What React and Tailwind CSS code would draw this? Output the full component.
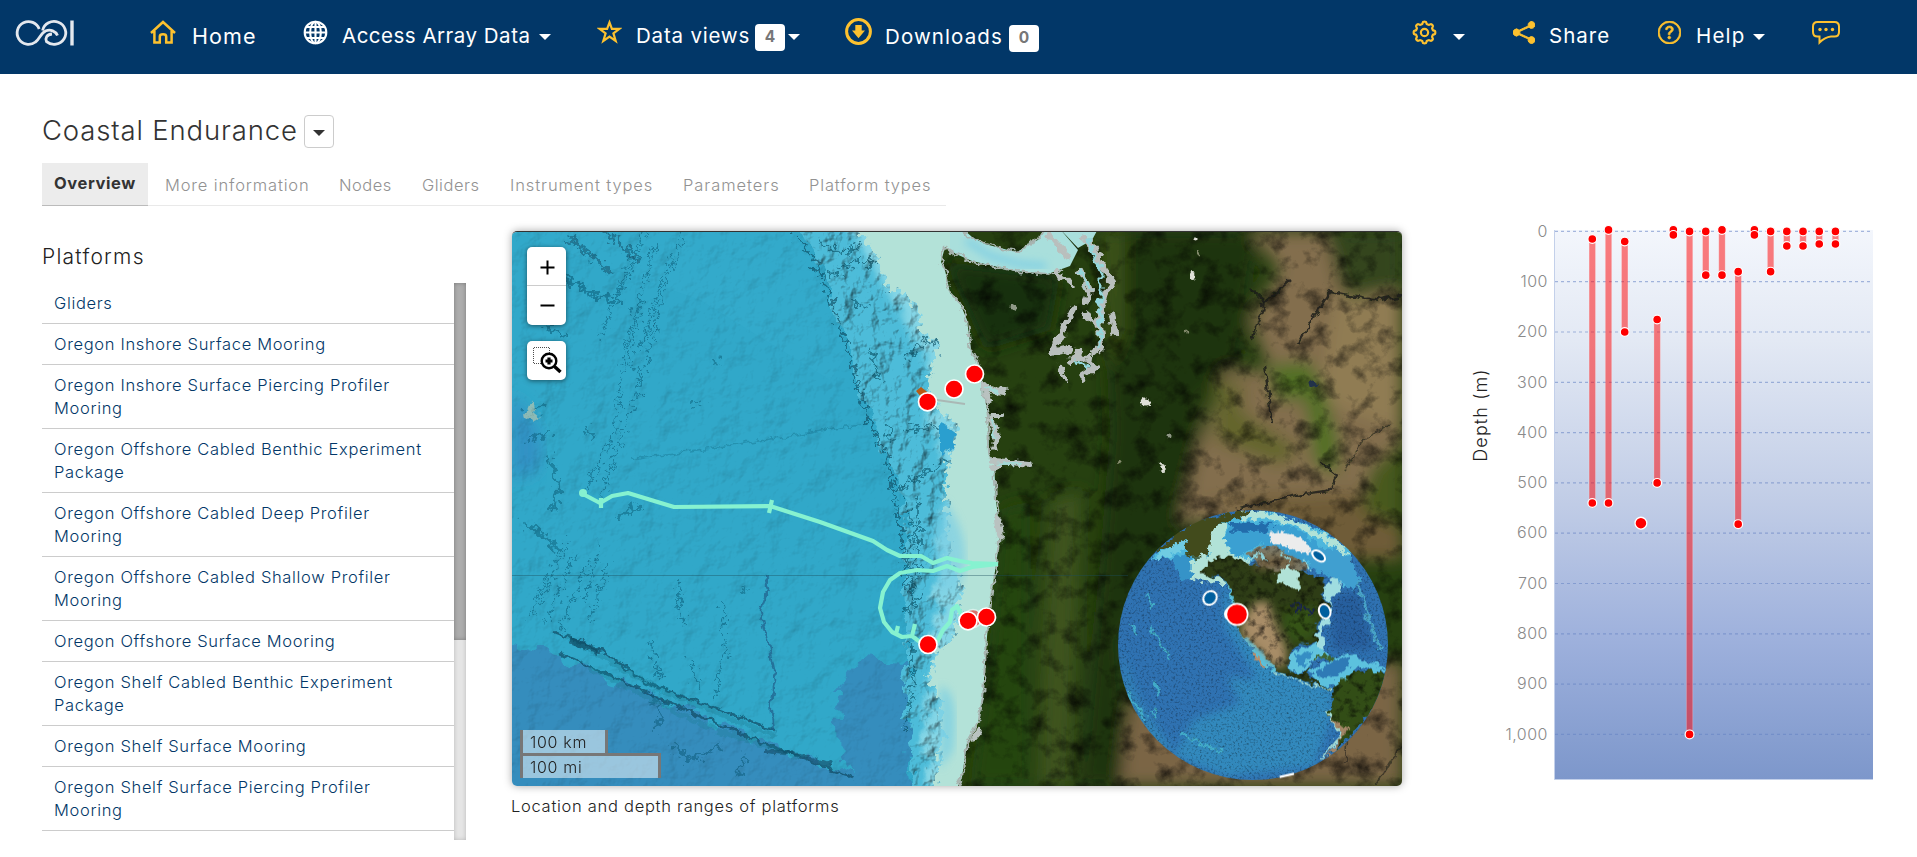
import React from "react";
import { BsShareFill, BsQuestionCircle } from "react-icons/bs";

const PLATFORMS = [
  "Gliders",
  "Oregon Inshore Surface Mooring",
  "Oregon Inshore Surface Piercing Profiler Mooring",
  "Oregon Offshore Cabled Benthic Experiment Package",
  "Oregon Offshore Cabled Deep Profiler Mooring",
  "Oregon Offshore Cabled Shallow Profiler Mooring",
  "Oregon Offshore Surface Mooring",
  "Oregon Shelf Cabled Benthic Experiment Package",
  "Oregon Shelf Surface Mooring",
  "Oregon Shelf Surface Piercing Profiler Mooring",
];

// [column, shallowest depth, deepest depth]
const RANGES = [
  [0, 15, 540],
  [1, -3, 540],
  [2, 20, 200],
  [4, 175, 500],
  [5, -3, 7],
  [6, 0, 1000],
  [7, 0, 87],
  [8, -3, 87],
  [9, 80, 582],
  [10, -3, 7],
  [11, 0, 80],
  [12, 0, 29],
  [13, 0, 29],
  [14, 0, 25],
  [15, 0, 25],
];

const GEAR = Array.from({ length: 96 }, (_, i) => {
  const a = (i / 96) * Math.PI * 2;
  const r = 9.3 + 1.1 * Math.tanh(2.2 * Math.cos(8 * a));
  return `${(12 + r * Math.cos(a)).toFixed(2)},${(12 + r * Math.sin(a)).toFixed(2)}`;
}).join(" ");

function Caret({ className }) {
  return (
    <svg className={"h-[6px] w-[12px] shrink-0 " + className} viewBox="0 0 12 6">
      <path d="M0 0H12L6 6Z" fill="currentColor" />
    </svg>
  );
}

function Label({ className, children }) {
  return (
    <span className={"shrink-0 whitespace-nowrap font-normal leading-[30px] text-white " + className}>
      {children}
    </span>
  );
}

function Badge({ className, children }) {
  return (
    <span
      className={
        "flex h-[27px] w-[30px] shrink-0 items-center justify-center rounded-[4px] bg-white pb-[2px] text-[15.5px] font-bold text-[#777] " +
        className
      }
    >
      {children}
    </span>
  );
}

function Header() {
  return (
    <header className="flex h-[74px] items-start bg-[#023768] text-white">
      <svg className="ml-[14px] mt-[18px] h-[30px] w-[62px] shrink-0" viewBox="0 0 62 30" fill="none" stroke="#e4e8ee" strokeWidth="2.8">
        <path d="M25.200 11A11.400 11.400 0 1 0 21.500 24C26 21 26.500 15 32 12.800C36.500 11.200 41.500 13 43.500 17.500" />
        <path d="M28.600 12.500A11.700 11.400 0 1 1 32.500 23.600C31 20 32.500 16.500 38 16" />
        <path d="M58 2.500V27.500" strokeWidth="3.400" />
      </svg>
      <svg className="ml-[74px] mt-[20px] h-[24px] w-[26px] shrink-0" viewBox="0 0 26 24" fill="none" stroke="#fdc12f" strokeWidth="2.5">
        <path d="M1 13L13 2L25 13M4.400 11V22.500H9.800V16.500C9.800 13.600 16.200 13.600 16.200 16.500V22.500H21.600V11" />
      </svg>
      <Label className="ml-[16px] mt-[21px] w-[111px] text-[21.500px] tracking-[1.100px]">Home</Label>
      <svg className="mt-[20px] h-[25px] w-[25px] shrink-0" viewBox="0 0 25 25" fill="none" stroke="#fff" strokeWidth="2.100">
        <circle cx="12.500" cy="12.500" r="10.800" />
        <ellipse cx="12.500" cy="12.500" rx="5.300" ry="10.800" />
        <path d="M12.500 1.500V23.500M1.700 12.500H23.300M3.500 7H21.500M3.500 18H21.500" />
      </svg>
      <Label className="ml-[14px] mt-[21px] w-[197px] text-[20.500px] tracking-[0.500px]">Access Array Data</Label>
      <Caret className="mt-[34px]" />
      <svg className="ml-[46px] mt-[19px] h-[25px] w-[25px] shrink-0" viewBox="0 0 25 25" fill="none" stroke="#fdc12f" strokeWidth="2.200">
        <path d="M12.500 3.400L14.900 9.900H22.300L16.400 14.300L18.700 22L12.500 17.500L6.300 22L8.600 14.300L2.700 9.900H10.100Z" />
      </svg>
      <Label className="ml-[14px] mt-[21px] w-[119px] text-[20.500px] tracking-[0.800px]">Data views</Label>
      <Badge className="mt-[24px]">4</Badge>
      <Caret className="ml-[3px] mt-[34px]" />
      <svg className="ml-[45px] mt-[18px] h-[27px] w-[27px] shrink-0" viewBox="0 0 27 27">
        <circle cx="13.500" cy="13.500" r="11.900" fill="none" stroke="#fdc12f" strokeWidth="3" />
        <path d="M10.300 7H16.700V12.500H20L13.500 20.200L7 12.500H10.300Z" fill="#fdc12f" />
      </svg>
      <Label className="ml-[13px] mt-[22px] w-[124px] text-[20.500px] tracking-[1.100px]">Downloads</Label>
      <Badge className="mt-[25px]">0</Badge>
      <svg className="ml-[373px] mt-[20px] h-[25px] w-[25px] shrink-0" viewBox="0 0 24 24" fill="none" stroke="#fdc12f">
        <polygon points={GEAR} strokeWidth="2.100" />
        <circle cx="12" cy="12" r="3.500" strokeWidth="2.100" />
      </svg>
      <Caret className="ml-[16px] mt-[34px]" />
      <BsShareFill className="ml-[48px] mt-[21px] h-[23px] w-[22px] shrink-0 text-[#fdc12f]" strokeWidth="0.700" />
      <Label className="ml-[14px] mt-[21px] w-[109px] text-[20.500px] tracking-[1px]">Share</Label>
      <BsQuestionCircle className="mt-[21px] h-[23px] w-[23px] shrink-0 text-[#fdc12f]" strokeWidth="0.500" />
      <Label className="ml-[15px] mt-[21px] w-[57px] text-[20.500px] tracking-[1.200px]">Help</Label>
      <Caret className="mt-[34px]" />
      <svg className="ml-[47px] mt-[20px] h-[26px] w-[28px] shrink-0" viewBox="0 0 28 26" fill="none" stroke="#fdc12f" strokeWidth="2">
        <path d="M5.500 2H22.500Q27 2 27 6.500V12Q27 16.500 22.500 16.500H19C14 17 10.500 19.500 7.500 22.500V16.500H5.500Q1 16.500 1 12V6.500Q1 2 5.500 2Z" />
        <g fill="#fdc12f" stroke="none">
          <circle cx="8" cy="9.500" r="1.700" />
          <circle cx="14" cy="9.500" r="1.700" />
          <circle cx="20.500" cy="9.500" r="1.700" />
        </g>
      </svg>
    </header>
  );
}

function Tabs() {
  const tab = "shrink-0 whitespace-nowrap pt-[11px] text-[16.5px] font-light leading-[23px] text-[#929292] ";
  return (
    <nav className="mt-[15px] flex h-[43px] w-[904px] border-b border-[#e9e9e9]">
      <div className="-mb-px h-[43px] w-[106px] shrink-0 whitespace-nowrap border-b border-[#bbb] bg-[#ececec] pl-[12px] pt-[9px] text-[16.5px] font-bold leading-[23px] tracking-[0.600px] text-[#333]">
        Overview
      </div>
      <div className={tab + "ml-[17px] w-[174px] tracking-[0.850px]"}>More information</div>
      <div className={tab + "w-[83px] tracking-[0.500px]"}>Nodes</div>
      <div className={tab + "w-[88px] tracking-[0.500px]"}>Gliders</div>
      <div className={tab + "w-[173px] tracking-[0.900px]"}>Instrument types</div>
      <div className={tab + "w-[126px] tracking-[0.950px]"}>Parameters</div>
      <div className={tab + "tracking-[0.850px]"}>Platform types</div>
    </nav>
  );
}

function Globe() {
  return (
    <g transform="translate(940 490) scale(0.33333)">
      <clipPath id="globe">
        <circle cx="939" cy="465" r="405" />
      </clipPath>
      <g clipPath="url(#globe)">
        <g filter="url(#speckle)">
          <rect x="530" y="50" width="820" height="830" fill="#2f72b2" />
          <g filter="url(#blurBig)">
            <path d="M860 560L1180 590L1170 700L1120 830L860 860L700 800L760 690L900 640Z" fill="#3389bd" />
            <path d="M540 480L600 640L700 780L650 790L560 650Z" fill="#3085ba" />
            <path d="M1170 320L1260 300L1300 480L1180 480Z" fill="#285f9e" />
            <path d="M850 270L930 460L1060 560L1150 590L1100 620L960 580L850 400Z" fill="#308abf" />
          </g>
          <path d="M1225 205Q1270 320 1300 430L1325 480" fill="none" stroke="#48a4c9" strokeWidth="10" filter="url(#coast)" />
          <path d="M630 410L690 505M575 405L590 430M640 570L660 610M560 610L620 690M720 730L850 790M640 660L650 690M620 310L640 350" fill="none" stroke="#42acca" strokeWidth="8" filter="url(#coast)" />
        </g>
        <g filter="url(#coast)">
          <path d="M640 190L735 145L850 90L900 65H990L1140 120L1230 180L1215 300L1190 265L1090 215L1000 220L880 210L800 220L760 270L720 260L700 205L640 208Z" fill="#4db7dd" />
          <path d="M700 205L750 190L760 270L720 265Z" fill="#3593c8" />
          <path d="M870 105L990 95L1090 125L1160 190L1100 220L1060 210L960 160L890 210L850 150Z" fill="#3aa0d2" />
          <path d="M1120 170L1210 180L1260 260L1240 300L1190 270L1110 230Z" fill="#3f9fd0" />
          <path d="M870 95L1000 102L980 125L880 125Z" fill="#246cab" />
          <path d="M900 62Q1010 60 1100 110L1200 160L1230 200L1080 115L980 85L900 90Z" fill="#b1e2d7" />
          <path d="M640 185L760 95L940 58L920 75L830 105L800 200L740 200L735 148L690 170Z" fill="#434b1d" />
          <path d="M645 195L700 165L735 148L738 175L690 200L650 208Z" fill="#6fcce2" />
          <path d="M805 195L810 150L825 105L865 98L850 145L870 190L920 205L940 230L840 215L795 230Z" fill="#b1e2d7" />
          <path d="M755 205L800 195V260L840 262L860 280L780 275L755 265Z" fill="#b1e2d7" />
          <path d="M850 260L865 290L880 340L895 420L925 460L975 530L1010 548L1000 500L950 430L890 300Z" fill="#5ac2dd" />
        </g>
        <g filter="url(#landTex2)">
          <g filter="url(#coast)">
            <path d="M780 245L830 197L880 203L930 222L1000 228L1050 235L1100 250L1150 262L1155 285L1145 310L1165 345L1150 380L1130 400L1128 435L1145 475L1138 485L1120 458L1080 460L1050 485L1048 530L1065 548L1090 545L1105 530L1115 535L1108 565L1140 570L1175 600L1160 602L1120 580L1060 565L1005 540L960 480L930 450L900 430L888 390L880 320L860 275L835 258L800 262Z" fill="#2e3c12" />
            <path d="M920 195L960 165L1010 170L1060 200L1110 220L1100 245L1000 240L940 218Z" fill="#7b7a68" />
          </g>
          <g filter="url(#blurBig)">
            <path d="M945 335L985 335L1005 400L1040 480L1035 530L1000 530L900 430L910 390Z" fill="#a88d68" />
            <path d="M1020 370L1130 345L1125 445L1050 460Z" fill="#345214" />
            <path d="M960 200L1070 200L1060 230L940 240Z" fill="#6f5d3d" />
          </g>
          <g filter="url(#coast)">
            <path d="M1185 575L1230 545L1300 540L1340 545L1330 620L1240 730L1180 790L1205 730L1165 680Z" fill="#304d16" />
            <path d="M1165 680L1210 705L1230 710L1180 785L1150 810L1205 735Z" fill="#a38767" />
          </g>
        </g>
        <g filter="url(#coast)">
          <path d="M950 490L975 528L968 532L935 485Z" fill="#b88f6c" />
          <path d="M920 215L960 190L985 215M1020 190L1050 215M1090 205L1110 235" fill="none" stroke="#8fd5dc" strokeWidth="6" />
          <path d="M1010 250L1045 225L1080 262L1078 305L1050 285L1010 275Z" fill="#b1e2d7" />
          <path d="M1145 300L1195 260L1205 305L1175 320L1165 400L1145 430L1155 480L1138 480L1128 440L1150 380L1170 345Z" fill="#9fdde0" />
          <path d="M1050 490L1120 460L1145 475L1165 500L1115 512L1100 535L1075 550L1050 535Z" fill="#62c4de" />
          <path d="M1065 498L1120 482L1105 512L1075 535Z" fill="#358dc4" />
          <path d="M1110 540L1180 505L1245 490L1260 510L1310 520L1340 540L1300 545L1260 530L1190 580L1155 590L1120 565Z" fill="#5cc1de" />
          <path d="M1125 545L1175 515L1235 500L1225 530L1170 565L1135 560Z" fill="#2f7ab6" />
          <path d="M1120 502Q1150 488 1190 505L1186 511Q1150 499 1122 508Z" fill="#3e6330" />
          <path d="M1005 545L1060 570L1175 600" fill="none" stroke="#a5dcd4" strokeWidth="4" />
          <path d="M1165 660L1175 690L1205 735L1145 805" fill="none" stroke="#a5dcd4" strokeWidth="5" />
          <path d="M985 130L1030 122L1090 145L1120 195L1085 188L1040 168L1000 165Z" fill="#ececec" />
          <path d="M1050 345L1080 342L1074 372M1090 352L1118 360L1102 370" fill="none" stroke="#17204d" strokeWidth="6" />
        </g>
      </g>
      <g fill="#005f9e" stroke="#fff" strokeWidth="6">
        <ellipse cx="810" cy="324" rx="19" ry="22" transform="rotate(40 810 324)" />
        <ellipse cx="1154" cy="364" rx="17" ry="22" transform="rotate(-20 1154 364)" />
        <ellipse cx="1136" cy="198" rx="22" ry="13" transform="rotate(38 1136 198)" />
      </g>
      <circle cx="874" cy="372" r="22" fill="#fff" />
      <circle cx="891" cy="373" r="32" fill="#f00" stroke="#fff" strokeWidth="5" />
      <path d="M1019 861L1062 851" stroke="#fff" strokeWidth="7" />
    </g>
  );
}

function MapArt() {
  return (
    <svg className="-mt-px block h-[555px] w-[890px]" viewBox="512 231 890 555">
      <defs>
        <filter id="blurBig" x="-20%" y="-20%" width="140%" height="140%"><feGaussianBlur stdDeviation="12" /></filter>
        <filter id="blurMid" x="-20%" y="-20%" width="140%" height="140%"><feGaussianBlur stdDeviation="8" /></filter>
        <filter id="blurSm" x="-10%" y="-10%" width="120%" height="120%"><feGaussianBlur stdDeviation="4" /></filter>
        <filter id="relief" x="0" y="0" width="100%" height="100%" colorInterpolationFilters="sRGB">
          <feTurbulence type="fractalNoise" baseFrequency="0.040 0.040" numOctaves="6" seed="4" result="n" />
          <feDiffuseLighting in="n" surfaceScale="1.300" diffuseConstant="1.120" lightingColor="#fff" result="l">
            <feDistantLight azimuth="225" elevation="63" />
          </feDiffuseLighting>
          <feComposite in="SourceGraphic" in2="l" operator="arithmetic" k1="1" result="m" />
          <feComposite in="m" in2="SourceGraphic" operator="in" />
        </filter>
        <filter id="rugged" x="-5%" y="-5%" width="110%" height="110%" colorInterpolationFilters="sRGB">
          <feTurbulence type="fractalNoise" baseFrequency="0.060" numOctaves="5" seed="9" result="n" />
          <feDisplacementMap in="SourceGraphic" in2="n" scale="34" result="d" />
          <feDiffuseLighting in="n" surfaceScale="3.800" diffuseConstant="1.180" lightingColor="#fff" result="l">
            <feDistantLight azimuth="215" elevation="60" />
          </feDiffuseLighting>
          <feComposite in="d" in2="l" operator="arithmetic" k1="1" result="m" />
          <feComposite in="m" in2="d" operator="in" />
        </filter>
        <filter id="landTex" x="0" y="0" width="100%" height="100%" colorInterpolationFilters="sRGB">
          <feTurbulence type="fractalNoise" baseFrequency="0.045" numOctaves="6" seed="12" result="n" />
          <feColorMatrix in="n" type="matrix" values="0 0 0 1.600 0.150  0 0 0 1.600 0.150  0 0 0 1.600 0.150  0 0 0 0 1" result="g" />
          <feComposite in="SourceGraphic" in2="g" operator="arithmetic" k1="1.050" result="m" />
          <feComposite in="m" in2="SourceGraphic" operator="in" />
        </filter>
        <filter id="landTex2" x="0" y="0" width="100%" height="100%" colorInterpolationFilters="sRGB">
          <feTurbulence type="fractalNoise" baseFrequency="0.040" numOctaves="4" seed="5" result="n" />
          <feColorMatrix in="n" type="matrix" values="0 0 0 1.500 0.200  0 0 0 1.500 0.200  0 0 0 1.500 0.200  0 0 0 0 1" result="g" />
          <feComposite in="SourceGraphic" in2="g" operator="arithmetic" k1="1" result="m" />
          <feComposite in="m" in2="SourceGraphic" operator="in" />
        </filter>
        <filter id="speckle" x="0" y="0" width="100%" height="100%" colorInterpolationFilters="sRGB">
          <feTurbulence type="fractalNoise" baseFrequency="0.150" numOctaves="3" seed="3" result="n" />
          <feColorMatrix in="n" type="matrix" values="0 0 0 0.900 0.550  0 0 0 0.900 0.550  0 0 0 0.900 0.550  0 0 0 0 1" result="g" />
          <feComposite in="SourceGraphic" in2="g" operator="arithmetic" k1="1" />
        </filter>
        <filter id="wobble" x="-5%" y="-5%" width="110%" height="110%">
          <feTurbulence type="fractalNoise" baseFrequency="0.120" numOctaves="3" seed="7" result="n" />
          <feDisplacementMap in="SourceGraphic" in2="n" scale="9" xChannelSelector="R" yChannelSelector="G" />
        </filter>
        <filter id="coast" x="-5%" y="-5%" width="110%" height="110%">
          <feTurbulence type="fractalNoise" baseFrequency="0.050" numOctaves="3" seed="8" result="n" />
          <feDisplacementMap in="SourceGraphic" in2="n" scale="32" xChannelSelector="R" yChannelSelector="G" />
        </filter>
        <filter id="scribble" x="-5%" y="-5%" width="110%" height="110%">
          <feTurbulence type="fractalNoise" baseFrequency="0.150" numOctaves="3" seed="21" result="n" />
          <feDisplacementMap in="SourceGraphic" in2="n" scale="20" xChannelSelector="R" yChannelSelector="G" />
        </filter>
        <filter id="inlet" x="-5%" y="-5%" width="110%" height="110%">
          <feTurbulence type="fractalNoise" baseFrequency="0.140" numOctaves="2" seed="21" result="n" />
          <feDisplacementMap in="SourceGraphic" in2="n" scale="12" xChannelSelector="R" yChannelSelector="G" />
        </filter>
      </defs>

      {/* deep sea floor */}
      <g filter="url(#relief)">
        <rect x="512" y="231" width="500" height="555" fill="#31a8c9" />
        <g filter="url(#coast)">
          <path d="M500 640L560 655L610 678L700 716L770 742L865 782V806H500Z" fill="#358dbd" />
          <path d="M838 690L862 660L905 662L912 806H868L840 760Z" fill="#358dbd" />
        </g>
        <path d="M512 395Q550 430 538 470L512 480Z" fill="#3291c4" filter="url(#blurMid)" />
        <path d="M512 231H790L820 270L850 350L830 380L700 300L560 250Z" fill="#36acce" opacity="0.500" />
      </g>

      {/* abyssal ridges and fault scarp */}
      <g filter="url(#scribble)" fill="none" stroke="#0d4a63">
        <path d="M570 238L600 262L612 275M605 231L640 262" strokeWidth="4" opacity="0.500" />
        <path d="M562 275L585 290L612 300M545 325L565 335" strokeWidth="4" opacity="0.450" />
        <path d="M645 232L630 262L600 340M684 231L660 300L645 370L620 440L600 500M655 245L625 350L615 430L585 495M636 260L612 310M640 300L628 370M668 260L640 350" strokeWidth="1.300" opacity="0.450" />
        <path d="M525 415L545 405M530 440L552 430M585 425L592 440M548 455L560 490L552 510M640 505L615 520" strokeWidth="4" opacity="0.400" />
        <path d="M520 520L545 535L558 555" strokeWidth="4" opacity="0.400" />
        <path d="M560 560L530 620M575 555L545 625M590 560L560 630M600 545L585 600M570 540L535 600M610 560L590 620" strokeWidth="1.300" opacity="0.450" />
        <path d="M680 580L678 600L685 625M722 600L725 650L715 700M690 660L700 690M650 640L660 680" strokeWidth="1.800" opacity="0.450" />
        <path d="M650 690L662 715L657 730M672 745L690 760L720 748M745 755L738 775" strokeWidth="3.500" opacity="0.400" />
        <path d="M635 365L640 380M654 325L660 332M694 403L700 406M712 360L720 362M740 588L748 590" strokeWidth="3" opacity="0.400" />
      </g>
      <g filter="url(#wobble)" fill="none" stroke="#0d4a63">
        <path d="M555 632L600 650L650 685L700 702L775 730M560 653L620 680L690 712L760 742L855 778" strokeWidth="2.600" opacity="0.700" />
        <path d="M565 636L660 690L775 736M590 668L700 724L800 758" strokeWidth="5" stroke="#1c7f94" opacity="0.350" />
        <path d="M570 640L598 650" strokeWidth="7" opacity="0.700" />
        <path d="M765 575L768 590L760 610L768 640L776 680L770 705L774 730" strokeWidth="2.600" stroke="#22638e" opacity="0.750" />
        <path d="M765 751L800 754L830 765" strokeWidth="4" opacity="0.600" />
        <path d="M630 459L720 447L860 425" strokeWidth="1.500" opacity="0.250" />
      </g>
      <path d="M522 417L528 410L532 400L535 412L541 417L533 423Z" fill="#b3c6b0" opacity="0.700" filter="url(#wobble)" />

      {/* continental slope */}
      <g filter="url(#rugged)">
        <path d="M795 225L820 262L827 300L850 345L857 380L867 410L883 450L901 490L905 530L908 570L909 660L902 700L914 800H1010V225Z" fill="#4dbcd9" />
        <path d="M845 225L880 280L912 330L930 370L930 420L950 470L940 560L930 640L927 800H1010V225Z" fill="#84d6e6" filter="url(#blurSm)" />
      </g>
      <g filter="url(#scribble)" fill="none" stroke="#0b4258">
        <path d="M795 233L815 262L828 290L838 320L848 350L858 385L868 420L885 450L893 490L902 540L906 580L912 600" strokeWidth="2.200" opacity="0.600" />
        <path d="M818 240L840 252L862 245M830 275L855 262L878 262M888 292L900 275L920 262" strokeWidth="2.200" opacity="0.550" />
        <path d="M905 360L925 340L938 345M905 430L935 425L948 430M895 488L925 475L948 460M885 420L892 440M850 300L870 310M870 350L880 380" strokeWidth="2.400" opacity="0.550" />
        <path d="M905 500L915 530L908 560L915 600M915 585L908 610L925 595M912 640V690L905 730M918 500V580" strokeWidth="1.800" opacity="0.550" />
      </g>

      {/* continental shelf */}
      <g filter="url(#scribble)">
        <path d="M850 221L866 243L880 262L888 290L905 292L918 312L920 330L940 345L932 365L927 395L945 415L958 428L950 455L945 480L947 520L950 560L962 590L955 635L935 655L928 680L942 700L943 740L932 800H1010V221Z" fill="#b3e2d8" />
      </g>
      <path d="M944 500Q975 540 960 585L938 595L934 530Z" fill="#7ccfe4" opacity="0.700" filter="url(#blurSm)" />
      <path d="M940 686Q960 690 953 750L940 770Z" fill="#76cde3" opacity="0.700" filter="url(#blurSm)" />
      <path d="M940 422L957 434L952 448L940 455Z" fill="#2c9fcf" filter="url(#wobble)" />

      {/* strait between the island and the peninsula */}
      <path d="M950 225H1112V300H1040L950 275Z" fill="#a9dfdc" />
      <path d="M966 240L990 256L1020 264L1046 266" fill="none" stroke="#74cbe6" strokeWidth="5" filter="url(#blurSm)" />

      {/* land */}
      <g>
        <clipPath id="landClip">
          <path d="M963 229L972 237L985 244L1008 250L1018 252L1029 243L1038 240L1044 229H1060L1078 248L1092 240L1098 229H1402V788H957L962 777L967 743L978 723L983 697L985 663L987 637L990 603L996 565L1000 535L996 500L994 462L989 455L988 414L982 385L979 365L971 350L967 320L960 303L950 293L945 270L941 262L945 247L956 254L972 261L1015 271L1048 274L1070 266L1078 250L1060 229H1044Z" />
        </clipPath>
        <g clipPath="url(#landClip)" filter="url(#landTex)">
          <rect x="930" y="225" width="480" height="565" fill="#243d0f" />
          <g filter="url(#blurMid)">
            <path d="M945 262L1060 275L1050 330L985 350Z" fill="#192e0e" />
            <path d="M1000 510L1030 500L1030 786H970L990 640Z" fill="#24420f" />
            <path d="M1050 500L1082 490L1072 786H1038L1042 640Z" fill="#3b4f1b" />
            <path d="M1100 231L1260 231L1240 360L1200 400L1190 540L1120 640L1130 786H1080L1100 560L1110 430Z" fill="#1c310c" />
            <path d="M1100 231H1125V330L1110 370Z" fill="#374e17" />
            <path d="M1250 231H1330L1350 300H1402V540H1330L1180 520L1200 440L1225 370L1270 370L1250 320L1280 270Z" fill="#7d6949" />
            <path d="M1325 231H1402V295L1340 290Z" fill="#33431a" />
            <path d="M1335 300L1400 290V430L1320 400Z" fill="#897650" />
            <path d="M1268 365L1310 362L1325 390L1338 440V475L1315 465L1305 400L1275 400Z" fill="#4e6a24" />
            <path d="M1215 380L1245 385L1240 410L1300 450L1280 465L1215 440Z" fill="#5f602c" />
            <path d="M1130 700L1160 690L1402 660V786H1120Z" fill="#756142" />
            <path d="M1190 500L1402 490V560L1340 560L1260 510Z" fill="#6a5936" />
            <path d="M1370 470L1402 440V530L1360 510Z" fill="#45551d" />
          </g>
        </g>
        <g fill="none" stroke="#171b16" filter="url(#wobble)">
          <path d="M1250 288L1265 302L1290 280M1298 345L1312 320L1330 292L1380 300L1410 295" strokeWidth="2.400" opacity="0.800" />
          <path d="M1265 302L1252 340M1265 365L1268 395L1272 422M1235 510L1290 496L1330 490L1338 475L1320 462" strokeWidth="2.200" opacity="0.800" />
          <path d="M1345 470L1362 440L1390 425M1346 700L1345 760M1402 745L1376 785" strokeWidth="1.600" opacity="0.550" />
          <path d="M1310 382L1318 388" strokeWidth="5" stroke="#22304a" />
        </g>
        <g fill="#dfe0d8" filter="url(#wobble)">
          <circle cx="1145" cy="402" r="4.500" />
          <circle cx="1193" cy="276" r="4" />
          <circle cx="1195" cy="238" r="2.500" />
          <circle cx="1014" cy="308" r="3.500" opacity="0.600" />
          <circle cx="1162" cy="467" r="3" />
          <circle cx="1168" cy="437" r="2.500" opacity="0.600" />
          <path d="M1197 251L1200 256M1120 460L1118 465M1183 330L1187 335" stroke="#c9c5ad" strokeWidth="2" opacity="0.600" />
        </g>
        <path d="M963 231L972 237L985 244L1008 250L1018 252L1029 243L1038 240L1044 231M945 247L956 254L972 261L1015 271L1048 274L1062 270M945 247L941 262L945 270L950 293L960 303L967 320L971 350L979 365L982 385L988 414L989 455L994 462L996 500L1000 535L996 565L990 603L987 637L985 663L983 697L978 723L967 743L962 777L957 786" fill="none" stroke="#a8b4b0" strokeWidth="2" filter="url(#wobble)" />
      </g>

      {/* inland waters */}
      <g fill="none" strokeLinecap="round" strokeLinejoin="round" filter="url(#inlet)">
        <path d="M1048 233L1068 258M1084 238L1096 252L1104 270L1114 282L1104 296L1099 320L1102 345L1092 354M1080 272L1090 290L1086 300M1055 272L1072 284M1074 308L1060 336L1052 352L1070 348M1085 315L1098 325M1112 315L1115 332M1076 356L1086 358L1094 368L1082 376M1060 366L1066 378M1070 362L1078 352" stroke="#b9bfbd" strokeWidth="6" />
        <path d="M1088 240L1100 270L1100 300L1100 345M1080 272L1090 290M1076 360L1088 368" stroke="#93d6da" strokeWidth="3" />
      </g>
      <g fill="none" strokeLinecap="round" strokeLinejoin="round" filter="url(#wobble)">
        <path d="M984 387L992 390L1004 391M992 416L1002 416M992 420L997 436L994 448M992 461L1010 462L1030 464M984 384L989 400M992 468L1000 466M998 520L1000 536M974 738L979 732" stroke="#b9c2c0" strokeWidth="6" />
        <path d="M986 388L996 391M996 464L1020 463M994 422L994 440" stroke="#a2dad6" strokeWidth="2.600" />
      </g>

      <path d="M512 575.500H1128" stroke="#1b4d5c" strokeOpacity="0.400" strokeWidth="1" />
      <path d="M930 399L965 404" stroke="#aab8b5" strokeWidth="2" />
      <path d="M916 391L921 387L926 391L930 394L922 398Z" fill="#b85a14" />

      {/* glider tracks */}
      <g fill="none" stroke="#86f2d0" strokeWidth="4.200" strokeLinejoin="round">
        <path d="M581 493L600 503L612 496L628 493L674 507L770 506L820 522L873 541L887 550L900 556L921 556L933 563L947 558L960 561L972 563L998 564" />
        <path d="M998 564L972 567L960 571L947 566L933 571L917 570L900 573L890 580L883 592L880 608L884 622L892 632L902 637L912 636L915 624M912 636L920 642" />
        <path d="M937 642L943 630L950 622L952 610L957 606L961 614L970 617" />
        <path d="M601 498V508M772 500L769 513M898 626L896 634" />
      </g>
      <circle cx="583" cy="493" r="4" fill="#86f2d0" />

      <g fill="#f00" stroke="#fff" strokeWidth="1.700">
        <circle cx="927.500" cy="401.800" r="9" />
        <circle cx="954" cy="389" r="9" />
        <circle cx="974.500" cy="374" r="9" />
        <circle cx="928" cy="644.500" r="9" />
        <circle cx="973" cy="618.500" r="9" opacity="0.500" />
        <circle cx="968" cy="620.800" r="9" />
        <circle cx="986.500" cy="617" r="9" />
      </g>
      <Globe />
    </svg>
  );
}

function MapPanel() {
  return (
    <div className="relative h-[555px] w-[890px] overflow-hidden rounded-[5px] border-t border-[#333]">
      <MapArt />
      <div className="absolute left-[15px] top-[15px] flex flex-col gap-4">
        <div className="h-[78px] w-[39px] rounded-[5px] bg-white shadow-[0_1px_5px_rgba(0,0,0,0.5)]">
          <div className="flex h-[39px] items-center justify-center border-b border-[#ccc] pl-[2px] pt-[2px]">
            <svg className="h-[15px] w-[15px]" viewBox="0 0 15 15" stroke="#000" strokeWidth="2">
              <path d="M7.500 0.500V14.500M0.500 7.500H14.500" />
            </svg>
          </div>
          <div className="flex h-[39px] items-center justify-center pl-[2px]">
            <svg className="h-[15px] w-[15px]" viewBox="0 0 15 15" stroke="#000" strokeWidth="2">
              <path d="M0.500 7.500H14.500" />
            </svg>
          </div>
        </div>
        <div className="h-[39px] w-[39px] rounded-[5px] bg-white shadow-[0_1px_5px_rgba(0,0,0,0.5)]">
          <svg viewBox="0 0 39 39" className="h-[39px] w-[39px]" fill="none" stroke="#000">
            <path d="M14 22.500H6.500V6.500H22.500V13" strokeDasharray="1 1" strokeOpacity="0.700" />
            <circle cx="22" cy="20" r="7.300" strokeWidth="2.400" fill="#fff" />
            <path d="M27.500 25.500L33.500 31" strokeWidth="3.400" />
            <path d="M22 16.500V23.500M18.500 20H25.500" strokeWidth="3.200" />
          </svg>
        </div>
      </div>
      <div className="absolute bottom-[8px] left-[8px] text-[16px] font-light leading-[22px] tracking-[0.700px] text-[#222]">
        <div className="h-[26px] w-[88px] border-x-[3px] border-b-[3px] border-[#777] bg-white/50 pl-[7px] pt-px">100 km</div>
        <div className="-mt-[3px] h-[25px] w-[141px] border-x-[3px] border-t-[3px] border-[#777] bg-white/50 pl-[7px]">100 mi</div>
      </div>
    </div>
  );
}

function DepthChart() {
  const y = (d) => 21.4 + d * 0.503;
  const x = (i) => 132.3 + i * 16.21;
  return (
    <svg className="h-[580px] w-[420px] shrink-0 [font-family:Inter,sans-serif]" viewBox="0 0 420 580">
      <defs>
        <linearGradient id="depth" x1="0" y1="0" x2="0" y2="1">
          <stop offset="0" stopColor="#f3f6fc" />
          <stop offset="0.200" stopColor="#e3e9f4" />
          <stop offset="0.500" stopColor="#c0cce6" />
          <stop offset="0.750" stopColor="#9db0dc" />
          <stop offset="1" stopColor="#7d97cb" />
        </linearGradient>
      </defs>
      <rect x="94.500" y="20" width="318.500" height="549.500" fill="url(#depth)" />
      <path d="M94.500 20V569.500H413" fill="none" stroke="#c3d0ea" />
      {Array.from({ length: 11 }, (_, i) => (
        <g key={i}>
          <path d={`M95 ${y(i * 100)}H410`} stroke="#6482c3" strokeOpacity="0.550" strokeWidth="1.200" strokeDasharray="3 3" />
          <text x="88" y={y(i * 100) + 5.2} textAnchor="end" fontSize="16" fontWeight="300" letterSpacing="0.500" fill="#8a8a8a">
            {(i * 100).toLocaleString("en-US")}
          </text>
        </g>
      ))}
      <text transform="translate(27 205) rotate(-90)" textAnchor="middle" fontSize="18" fontWeight="300" letterSpacing="1.100" fill="#222">
        Depth (m)
      </text>
      {RANGES.map(([i, a, b]) => (
        <g key={i}>
          {b - a > 12 && (
            <rect x={x(i) - 3.2} y={y(a)} width="6.400" height={y(b) - y(a)} fill="#f00" fillOpacity="0.500" stroke="#fff" strokeOpacity="0.250" strokeWidth="0.900" />
          )}
          <circle cx={x(i)} cy={y(a)} r="4.400" fill="#f00" stroke="#fff" strokeWidth="1.200" />
          <circle cx={x(i)} cy={y(b)} r="4.400" fill="#f00" stroke="#fff" strokeWidth="1.200" />
        </g>
      ))}
      <circle cx={x(3)} cy={y(580)} r="5.900" fill="#f00" stroke="#fff" strokeWidth="1.300" />
    </svg>
  );
}

export default function App() {
  return (
    <div className="h-[857px] w-[1917px] overflow-hidden bg-white [font-family:Inter,sans-serif]">
      <Header />
      <main className="pl-[42px]">
        <div className="flex pt-[41px]">
          <h1 className="w-[262px] whitespace-nowrap text-[27.500px] font-light leading-[30px] tracking-[0.850px] text-[#333]">Coastal Endurance</h1>
          <button className="flex h-[33px] w-[30px] items-center justify-center rounded-[4px] border border-[#ccc] bg-white text-[#333]">
            <Caret className="mt-[3px]" />
          </button>
        </div>
        <Tabs />
        <div className="flex">
          <section className="w-[424px] shrink-0 pt-[38px]">
            <h2 className="h-[39px] text-[21px] font-light leading-[25px] tracking-[1.250px] text-[#222]">Platforms</h2>
            <div className="flex h-[557px]">
              <ul className="w-[412px] overflow-hidden">
                {PLATFORMS.map((p) => (
                  <li key={p} className="border-b border-[#ccc] pb-[8px] pl-[12px] pr-[20px] pt-[9px] text-[16.5px] font-light leading-[23px] tracking-[0.660px] text-[#023768]">
                    {p}
                  </li>
                ))}
              </ul>
              <div className="w-[12px] bg-[#e5e5e5] shadow-[inset_0_0_4px_rgba(0,0,0,0.2)]">
                <div className="h-[357px] bg-[#adadad] shadow-[inset_0_0_4px_rgba(0,0,0,0.3)]" />
              </div>
            </div>
          </section>
          <section className="ml-[46px] w-[890px] shrink-0 pt-[25px]">
            <div className="rounded-[5px] shadow-[0_0_8px_rgba(0,0,0,0.350)]">
              <MapPanel />
            </div>
            <p className="-ml-px mt-[9px] text-[16.500px] font-light leading-[23px] tracking-[0.710px] text-[#222]">Location and depth ranges of platforms</p>
          </section>
          <section className="ml-[58px] pt-[4px]">
            <DepthChart />
          </section>
        </div>
      </main>
    </div>
  );
}
